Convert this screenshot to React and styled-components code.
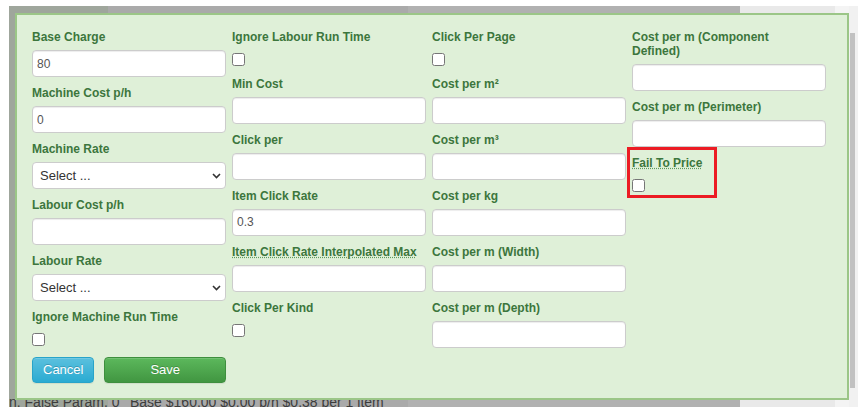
import styled, { createGlobalStyle } from 'styled-components';

const GlobalStyle = createGlobalStyle`
  html, body {
    margin: 0;
    padding: 0;
    background: #fff;
    font-family: "Liberation Sans", Arial, sans-serif;
  }
  *, *::before, *::after {
    box-sizing: border-box;
  }
`;

const columns = [
  [
    { label: 'Base Charge', type: 'text', value: '80' },
    { label: 'Machine Cost p/h', type: 'text', value: '0' },
    { label: 'Machine Rate', type: 'select' },
    { label: 'Labour Cost p/h', type: 'text' },
    { label: 'Labour Rate', type: 'select' },
    { label: 'Ignore Machine Run Time', type: 'check' },
  ],
  [
    { label: 'Ignore Labour Run Time', type: 'check' },
    { label: 'Min Cost', type: 'text' },
    { label: 'Click per', type: 'text' },
    { label: 'Item Click Rate', type: 'text', value: '0.3' },
    { label: 'Item Click Rate Interpolated Max', type: 'text', hint: true },
    { label: 'Click Per Kind', type: 'check' },
  ],
  [
    { label: 'Click Per Page', type: 'check' },
    { label: 'Cost per m²', type: 'text' },
    { label: 'Cost per m³', type: 'text' },
    { label: 'Cost per kg', type: 'text' },
    { label: 'Cost per m (Width)', type: 'text' },
    { label: 'Cost per m (Depth)', type: 'text' },
  ],
  [
    { label: 'Cost per m (Component Defined)', type: 'text' },
    { label: 'Cost per m (Perimeter)', type: 'text' },
    { label: 'Fail To Price', type: 'check', hint: true, marked: true },
  ],
];

const Chevron = () => (
  <svg width="9" height="6" viewBox="0 0 9 6">
    <polyline points="1,1 4.5,4.5 8,1" fill="none" stroke="#333" strokeWidth="1.6" />
  </svg>
);

const FieldControl = ({ field }) => {
  if (field.type === 'check') return <Checkbox type="checkbox" />;
  if (field.type === 'select') {
    return (
      <SelectWrap>
        <Select defaultValue="">
          <option value="">Select ...</option>
        </Select>
        <SelectArrow>
          <Chevron />
        </SelectArrow>
      </SelectWrap>
    );
  }
  return <Input type="text" defaultValue={field.value || ''} />;
};

const App = () => {
  return (
    <>
      <GlobalStyle />
      <Stage>
        <Backdrop>
          <Panel>
            <Grid>
              {columns.map((col, ci) => (
                <Column key={ci}>
                  {col.map((field) => (
                    <Field key={field.label} check={field.type === 'check'} marked={field.marked}>
                      <Label>
                        {field.hint ? <Hint>{field.label}</Hint> : field.label}
                      </Label>
                      <FieldControl field={field} />
                    </Field>
                  ))}
                  {ci === 0 && (
                    <Actions>
                      <Button variant="info">Cancel</Button>
                      <Button variant="success" grow>Save</Button>
                    </Actions>
                  )}
                </Column>
              ))}
            </Grid>
          </Panel>
          <BehindRow>
            <BehindCell width="121px">n. False Param. 0</BehindCell>
            <BehindCell>Base $160.00 $0.00 p/h $0.38 per 1 item</BehindCell>
          </BehindRow>
        </Backdrop>
        <ScrollTrack>
          <ScrollThumb />
        </ScrollTrack>
      </Stage>
    </>
  );
};

export default App;

const Stage = styled.div`
  display: flex;
  align-items: flex-start;
  width: 861px;
  height: 415px;
  padding: 6px 0 0 9px;
  overflow: hidden;
`;

const Backdrop = styled.div`
  width: 840px;
  height: 401px;
  overflow: hidden;
  background: linear-gradient(
    to right,
    #9fa69c 0,
    #9fa69c 99px,
    #aaaaaa 99px,
    #aaaaaa 399px,
    #b1b1b1 399px,
    #b1b1b1 731px,
    #e9e9e9 731px,
    #e9e9e9 826px,
    #f4f4f4 826px
  );
`;

const Panel = styled.div`
  position: relative;
  z-index: 1;
  width: 834px;
  margin: 7px 0 0 6px;
  padding: 15px 21px 15px 15px;
  background: #dff0d8;
  border: 2px solid #9bc687;
`;

const Grid = styled.div`
  display: grid;
  grid-template-columns: repeat(4, 194px);
  column-gap: 6px;
  align-items: start;
`;

const Column = styled.div`
  display: flex;
  flex-direction: column;
`;

const Field = styled.div`
  position: relative;
  display: flex;
  flex-direction: column;
  align-items: flex-start;
  margin-bottom: ${(p) => (p.check ? '11.2px' : '9px')};

  ${(p) =>
    p.marked &&
    `
    &::after {
      content: '';
      position: absolute;
      top: -9px;
      left: -5px;
      width: 90px;
      height: 51px;
      border: 3px solid #ec1c24;
      pointer-events: none;
    }
  `}
`;

const Label = styled.label`
  display: block;
  max-width: 186px;
  font-size: 12px;
  font-weight: bold;
  line-height: 14px;
  color: #3c763d;
  margin-bottom: 6px;
`;

const Hint = styled.span`
  text-decoration: underline dotted #5f9a5f;
  text-underline-offset: 1px;
`;

const Input = styled.input`
  width: 100%;
  height: 27px;
  padding: 0 4px;
  font-family: "Liberation Sans", Arial, sans-serif;
  font-size: 12px;
  color: #555;
  background: #fff;
  border: 1px solid #ccc;
  border-radius: 4px;
  box-shadow: inset 0 1px 1px rgba(0, 0, 0, 0.075);
  outline: none;
`;

const SelectWrap = styled.div`
  position: relative;
  width: 100%;
`;

const Select = styled.select`
  display: block;
  width: 100%;
  height: 27px;
  padding: 0 20px 0 7px;
  font-family: "Liberation Sans", Arial, sans-serif;
  font-size: 13px;
  color: #333;
  background: #fff;
  border: 1px solid #ccc;
  border-radius: 4px;
  appearance: none;
  -webkit-appearance: none;
  outline: none;
`;

const SelectArrow = styled.span`
  position: absolute;
  top: 50%;
  right: 5px;
  display: flex;
  transform: translateY(-50%);
  pointer-events: none;
`;

const Checkbox = styled.input`
  display: block;
  width: 13px;
  height: 13px;
  margin: 2.8px 0 0 0;
`;

const Actions = styled.div`
  display: flex;
  gap: 10px;
`;

const Button = styled.button`
  flex: ${(p) => (p.grow ? 1 : '0 0 62px')};
  height: 26px;
  padding: 0 10px;
  font-family: "Liberation Sans", Arial, sans-serif;
  font-size: 13px;
  color: #fff;
  text-shadow: 0 -1px 0 rgba(0, 0, 0, 0.2);
  border-radius: 4px;
  cursor: pointer;
  border: 1px solid ${(p) => (p.variant === 'info' ? '#28a4c9' : '#3e8f3e')};
  background: ${(p) =>
    p.variant === 'info'
      ? 'linear-gradient(to bottom, #5bc0de 0%, #2aabd2 100%)'
      : 'linear-gradient(to bottom, #5cb85c 0%, #419641 100%)'};
  box-shadow: inset 0 1px 0 rgba(255, 255, 255, 0.15), 0 1px 1px rgba(0, 0, 0, 0.075);
`;

const BehindRow = styled.div`
  display: flex;
  margin-top: -6px;
`;

const BehindCell = styled.div`
  flex: ${(p) => (p.width ? `0 0 ${p.width}` : '0 0 auto')};
  font-size: 14px;
  line-height: 16px;
  color: #3d3d3d;
  white-space: nowrap;
`;

const ScrollTrack = styled.div`
  width: 9px;
  height: 401px;
  background: #f1f1f1;
  padding: 27px 0 0 1px;
`;

const ScrollThumb = styled.div`
  width: 5px;
  height: 355px;
  background: #c1c1c1;
`;
